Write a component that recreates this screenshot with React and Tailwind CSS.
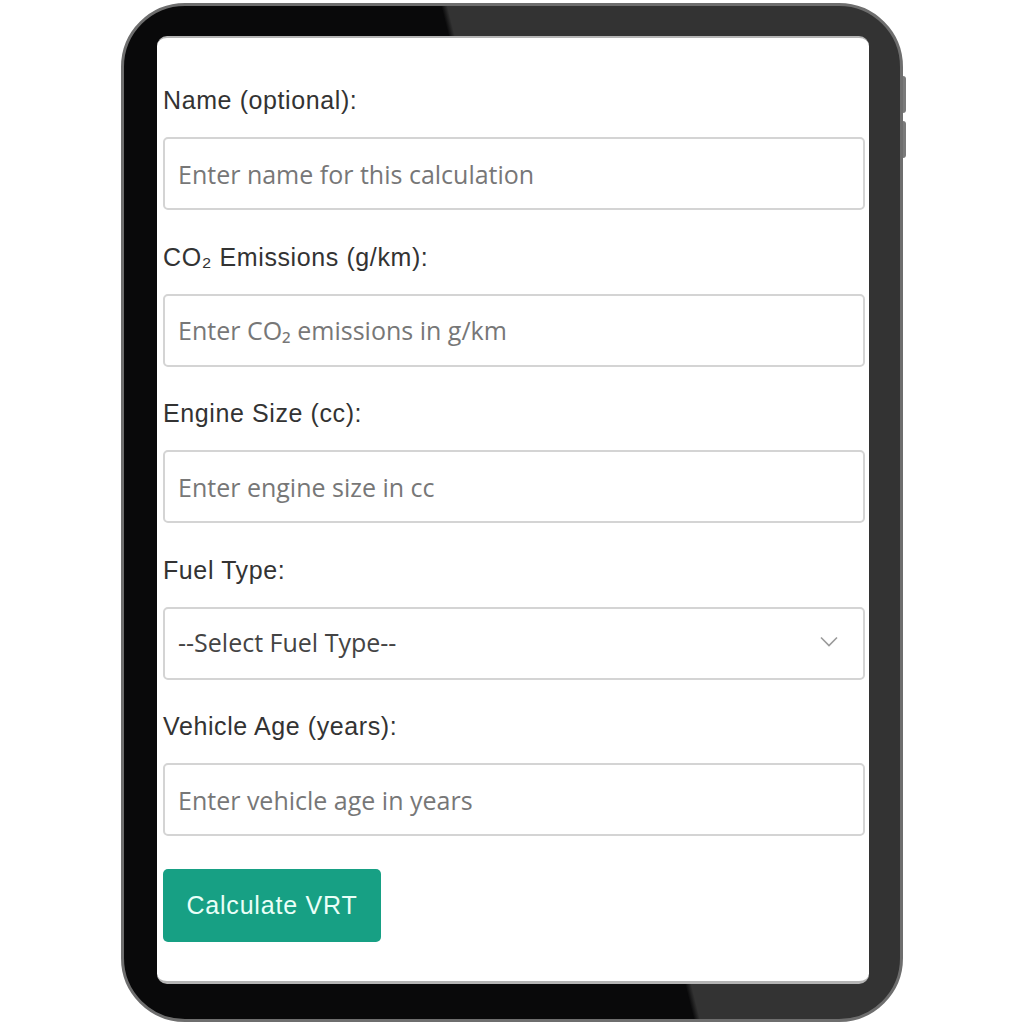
import { useState } from "react";

// Field wrapper
function Field({ label, children }) {
  return (
    <div className="mb-[33.5px] flex flex-col">
      <label className="mb-[24px] h-[26px] text-[25px] leading-[26px] tracking-[0.6px] text-[#333] font-['Liberation_Sans',Arial,sans-serif]">
        {label}
      </label>
      {children}
    </div>
  );
}

function Input({ placeholder, value, onChange }) {
  return (
    <input
      type="text"
      placeholder={placeholder}
      value={value}
      onChange={onChange}
      className="h-[73px] w-full rounded-[5px] border-2 border-[#d4d4d4] bg-white px-[13px] text-[25px] text-[#333] placeholder:text-[#777] font-['Open_Sans',sans-serif] focus:outline-none"
    />
  );
}

export default function App() {
  const [form, setForm] = useState({ name: "", co2: "", engine: "", fuel: "", age: "" });

  return (
    <div className="flex h-[1024px] w-[1024px] items-start justify-center bg-white pt-[3px]">
      {/* Tablet frame */}
      <div className="relative h-[1019px] w-[782px] rounded-[64px] border-[3px] border-[#6e6e6e] bg-[linear-gradient(76deg,#09090a_55.4%,#333333_56%)] px-[33px] pt-[30px]">
        {/* Side buttons */}
        <div className="absolute right-[-6px] top-[70px] h-[37px] w-[3px] rounded-r bg-[#7a7a7a]" />
        <div className="absolute right-[-6px] top-[115px] h-[37px] w-[3px] rounded-r bg-[#7a7a7a]" />

        {/* Screen */}
        <div className="h-[948px] w-[712px] rounded-[10px] border-t-[2px] border-b-[3px] border-[#b5b5b5] bg-white pl-[6px] pr-[4px] pt-[49px]">
          <Field label="Name (optional):">
            <Input
              placeholder="Enter name for this calculation"
              value={form.name}
              onChange={(e) => setForm({ ...form, name: e.target.value })}
            />
          </Field>
          <Field label="CO₂ Emissions (g/km):">
            <Input
              placeholder="Enter CO₂ emissions in g/km"
              value={form.co2}
              onChange={(e) => setForm({ ...form, co2: e.target.value })}
            />
          </Field>
          <Field label="Engine Size (cc):">
            <Input
              placeholder="Enter engine size in cc"
              value={form.engine}
              onChange={(e) => setForm({ ...form, engine: e.target.value })}
            />
          </Field>
          <Field label="Fuel Type:">
            <div className="relative">
              <select
                value={form.fuel}
                onChange={(e) => setForm({ ...form, fuel: e.target.value })}
                className="h-[73px] w-full appearance-none rounded-[5px] border-2 border-[#d4d4d4] bg-white px-[13px] text-[25px] text-[#444] font-['Open_Sans',sans-serif] focus:outline-none"
              >
                <option value="">--Select Fuel Type--</option>
                <option value="petrol">Petrol</option>
                <option value="diesel">Diesel</option>
                <option value="electric">Electric</option>
                <option value="hybrid">Hybrid</option>
              </select>
              <svg
                className="pointer-events-none absolute right-[27px] top-[29px]"
                width="18"
                height="11"
                viewBox="0 0 18 11"
                fill="none"
                stroke="#9a9a9a"
                strokeWidth="1.6"
              >
                <path d="M1 1.5l8 8 8-8" />
              </svg>
            </div>
          </Field>
          <Field label="Vehicle Age (years):">
            <Input
              placeholder="Enter vehicle age in years"
              value={form.age}
              onChange={(e) => setForm({ ...form, age: e.target.value })}
            />
          </Field>

          <button className="-mt-[0.5px] h-[73px] w-[218px] rounded-[5px] bg-[#17a084] text-[25px] tracking-[0.8px] text-[#eafff8] font-['Liberation_Sans',Arial,sans-serif]">
            Calculate VRT
          </button>
        </div>
      </div>
    </div>
  );
}
